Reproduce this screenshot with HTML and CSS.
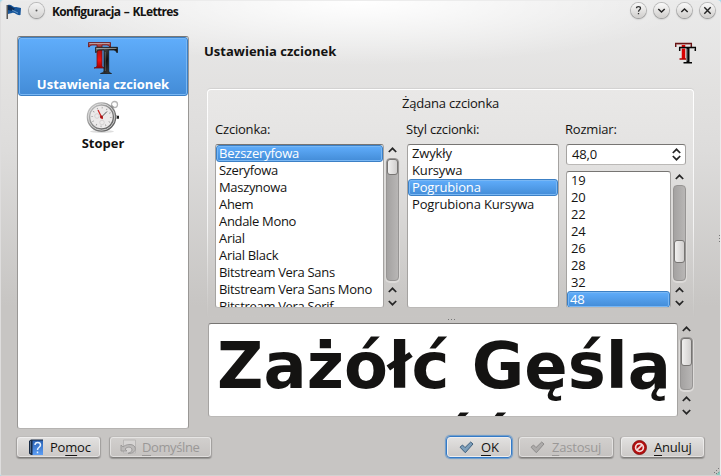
FILE: index.html
```html
<!DOCTYPE html>
<html lang="pl">
<head>
<meta charset="utf-8">
<title>Konfiguracja – KLettres</title>
<link rel="stylesheet" href="styles.css">
</head>
<body>
<svg class="defs" width="0" height="0">
  <defs>
    <linearGradient id="red" x1="0" y1="0" x2="0" y2="1"><stop offset="0" stop-color="#a56060"/><stop offset=".3" stop-color="#b01010"/><stop offset=".7" stop-color="#f01010"/><stop offset="1" stop-color="#a00000"/></linearGradient>
    <linearGradient id="blk" x1="0" y1="0" x2="1" y2="1"><stop offset="0" stop-color="#777"/><stop offset=".5" stop-color="#111"/><stop offset="1" stop-color="#555"/></linearGradient>
    <linearGradient id="steel" x1="0" y1="0" x2="1" y2="1"><stop offset="0" stop-color="#ccc"/><stop offset=".5" stop-color="#888"/><stop offset="1" stop-color="#555"/></linearGradient>
    <linearGradient id="book" x1="0" y1="0" x2="0" y2="1"><stop offset="0" stop-color="#2a62b4"/><stop offset="1" stop-color="#5b9df5"/></linearGradient>
    <symbol id="up" viewBox="0 0 9 6"><path d="M.8 5 4.500 1.300 8.200 5" fill="none" stroke="#262626" stroke-width="1.700"/></symbol>
    <symbol id="down" viewBox="0 0 9 6"><path d="M.8 1 4.500 4.700 8.200 1" fill="none" stroke="#262626" stroke-width="1.700"/></symbol>
    <symbol id="check" viewBox="0 0 15 13"><path d="M1 6.200 3.500 4 6 6.600 11.700 1 14 3 6.300 11.700Z"/></symbol>
    <symbol id="fonts" viewBox="0 0 32 34">
      <path d="M1.500 1.500H23.500V6H22.700Q22 4 20 4H15V25Q15 26.500 17.500 27H7Q10 26.500 10 25V4H5Q3 4 2.300 6H1.500Z" fill="url(#red)" stroke="#6c1416" stroke-width=".8"/>
      <path d="M8.500 6.300H30.500V11.500H29.700Q29 9 27 9H21.700V30Q21.700 32 24.500 32.500H13.500Q17 32 17 30V9H12Q10 9 9.300 11.500H8.500Z" fill="url(#blk)" stroke="#1a1a1a" stroke-width=".8"/>
      <path d="M2.500 2.500H22.500M9.500 7.500H29.500" stroke="#ccc" stroke-opacity=".6"/>
      <path d="M18.300 11V30" stroke="#bbb" stroke-opacity=".4" stroke-width=".8"/>
    </symbol>
  </defs>
</svg>
<div class="window">
  <header class="titlebar">
    <svg class="flag" width="16" height="16" viewBox="0 0 16 16"><path d="M1.200 1V15" stroke="#333" stroke-width="1.200"/><path d="M2 1C6 0 7 4 10 3L15 4 14.500 11C11 12 9 8 6 9L2 10Z" fill="#17569b"/><path d="M2 1.500C5 1 6 4 9 4.500L7 7 2 6Z" fill="#0d2e59"/><path d="M6 6 12 9" stroke="#6497ca"/></svg>
    <span class="round menu-dot"><svg width="15" height="15" viewBox="0 0 15 15"><circle cx="7.500" cy="7.500" r="1" fill="#555"/></svg></span>
    <h1>Konfiguracja – KLettres</h1>
    <div class="controls">
      <span class="round"><svg width="15" height="15" viewBox="0 0 15 15"><path d="M5.500 5.300C5.500 3 9.500 3 9.500 5.300 9.500 6.700 7.500 6.800 7.500 8.700M7.500 10V11.200" fill="none" stroke="#333" stroke-width="1.300"/></svg></span>
      <span class="round"><svg width="15" height="15" viewBox="0 0 15 15"><path d="M4.300 6 7.500 9 10.700 6" fill="none" stroke="#222" stroke-width="1.500"/></svg></span>
      <span class="round"><svg width="15" height="15" viewBox="0 0 15 15"><path d="M4.300 9 7.500 6 10.700 9" fill="none" stroke="#222" stroke-width="1.500"/></svg></span>
      <span class="round"><svg width="15" height="15" viewBox="0 0 15 15"><path d="M4.300 4.300 10.700 10.700M10.700 4.300 4.300 10.700" stroke="#222" stroke-width="1.400"/></svg></span>
    </div>
  </header>
  <main>
    <nav class="sidebar">
      <div class="page selected">
        <svg width="32" height="34"><use href="#fonts"/></svg>
        <span>Ustawienia czcionek</span>
      </div>
      <div class="page">
        <svg width="34" height="34" viewBox="0 0 34 34">
          <ellipse cx="16" cy="31.500" rx="12" ry="1.500" fill="#ddd"/>
          <circle cx="28.500" cy="4.500" r="3" fill="none" stroke="#b5b5b5" stroke-width="1.300"/>
          <path d="M24 9 27 6" stroke="#999" stroke-width="3"/>
          <path d="M29 17.200H33" stroke="#222" stroke-width="3"/><path d="M29.500 17H31" stroke="#bbb" stroke-width="4"/>
          <circle cx="15.500" cy="17" r="13" fill="#eceaea" stroke="url(#steel)" stroke-width="3.600"/>
          <circle cx="15.500" cy="17" r="13.200" fill="none" stroke="#e8e8e8" stroke-width=".8"/>
          <circle cx="15.500" cy="17" r="9.300" fill="none" stroke="#999" stroke-width="1.700" stroke-dasharray=".8 4.070"/>
          <circle cx="11" cy="16" r="2.300" fill="none" stroke="#d5d2d2"/><circle cx="16" cy="22.500" r="2.300" fill="none" stroke="#d5d2d2"/>
          <path d="M15.500 17 21 11.500" stroke="#555"/><path d="M12 10 16.500 19" stroke="#c22" stroke-width="1.200"/><circle cx="15.500" cy="17" r="1.500" fill="#a11"/>
        </svg>
        <span>Stoper</span>
      </div>
    </nav>
    <section class="content">
      <div class="heading"><h2>Ustawienia czcionek</h2>
        <svg width="22" height="22" viewBox="0 0 22 22"><path d="M.7 5V1.500H16.300V5" fill="none" stroke="#681313" stroke-width="1.500"/><path d="M2 2.500H15.500" stroke="#bd8585" stroke-width=".8"/><path d="M8.500 3V17" stroke="#d90000" stroke-width="3.500"/><path d="M4.500 17H11" stroke="#b00000" stroke-width="1.300"/><path d="M4.700 9V5.500H20.300V9" fill="none" stroke="#050505" stroke-width="1.500"/><path d="M6 6.500H20" stroke="#999" stroke-width=".6"/><path d="M13 6V21" stroke="#050505" stroke-width="3"/><path d="M8.500 20.800H17" stroke="#050505" stroke-width="1.600"/><path d="M12 7V19" stroke="#bbb" stroke-width=".6"/></svg>
      </div>
      <div class="group">
        <h3>Żądana czcionka</h3>
        <div class="choosers">
          <div class="column family">
            <label>Czcionka:</label>
            <div class="scroll-row">
              <ul class="field list"><li class="on">Bezszeryfowa</li><li>Szeryfowa</li><li>Maszynowa</li><li>Ahem</li><li>Andale Mono</li><li>Arial</li><li>Arial Black</li><li>Bitstream Vera Sans</li><li>Bitstream Vera Sans Mono</li><li>Bitstream Vera Serif</li></ul>
              <div class="scrollbar"><svg class="arrow"><use href="#up"/></svg><div class="track"><div class="thumb thumb-family"></div></div><svg class="arrow"><use href="#up"/></svg><svg class="arrow last"><use href="#down"/></svg></div>
            </div>
          </div>
          <div class="column style">
            <label>Styl czcionki:</label>
            <ul class="field list"><li>Zwykły</li><li>Kursywa</li><li class="on">Pogrubiona</li><li>Pogrubiona Kursywa</li></ul>
          </div>
          <div class="column size">
            <label>Rozmiar:</label>
            <div class="field spin"><span>48,0</span><span class="steps"><svg class="arrow"><use href="#up"/></svg><svg class="arrow"><use href="#down"/></svg></span></div>
            <div class="scroll-row">
              <ul class="field list sizes"><li>19</li><li>20</li><li>22</li><li>24</li><li>26</li><li>28</li><li>32</li><li class="on">48</li></ul>
              <div class="scrollbar"><svg class="arrow"><use href="#up"/></svg><div class="track"><div class="thumb thumb-size"></div></div><svg class="arrow"><use href="#up"/></svg><svg class="arrow last"><use href="#down"/></svg></div>
            </div>
          </div>
        </div>
      </div>
      <div class="grip"><i></i><i></i><i></i></div>
      <div class="scroll-row preview-row">
        <div class="field preview">Zażółć Gęślą<br>Jaźń</div>
        <div class="scrollbar"><svg class="arrow"><use href="#up"/></svg><div class="track"><div class="thumb thumb-preview"></div></div><svg class="arrow"><use href="#up"/></svg><svg class="arrow last"><use href="#down"/></svg></div>
      </div>
    </section>
    <div class="grip side"><i></i><i></i><i></i></div>
  </main>
  <footer>
    <button class="help"><svg width="16" height="17" viewBox="0 0 16 17"><path d="M1 2 3 .5H15V16H3L1 14.500Z" fill="#182b45"/><path d="M4.500 1.500H15V16H4.500Z" fill="url(#book)"/><path d="M2.500 2V14" stroke="#7186a0" stroke-width=".7"/><path d="M7 6C7 2.500 12.500 2.500 12.500 6 12.500 8.500 9.500 8 9.500 11M9.500 12.500V14.200" fill="none" stroke="#e6f3ff" stroke-width="1.500"/></svg><span>Po<u>m</u>oc</span></button>
    <button class="defaults" disabled><svg width="17" height="16" viewBox="0 0 17 16"><path d="M3.500 1H15.500V14H3.500Z" fill="#d6d4d3" stroke="#b9b7b6"/><path d="M1 6V12H7L5 10C8 7 12 8 12 11 12 13 10 13 8 14.500 18 14.500 17 5.500 10 5.500 6 5.500 4 7 3 8Z" fill="#bcbab9" stroke="#989696" stroke-width=".9"/></svg><span><u>D</u>omyślne</span></button>
    <button class="ok"><svg width="15" height="13" fill="#7d9fbb" stroke="#3f5f7d"><use href="#check"/></svg><span><u>O</u>K</span></button>
    <button class="apply" disabled><svg width="15" height="13" fill="#adabaa" stroke="#8e8c8b"><use href="#check"/></svg><span><u>Z</u>astosuj</span></button>
    <button class="cancel"><svg width="15" height="15" viewBox="0 0 15 15"><circle cx="7.500" cy="7.500" r="7" fill="#b50f0f" stroke="#7a0b0b" stroke-width=".8"/><circle cx="7.500" cy="7.500" r="3.900" fill="none" stroke="#f2dada" stroke-width="1.700"/><path d="M4.800 10.200 10.200 4.800" stroke="#f2dada" stroke-width="1.800"/></svg><span><u>A</u>nuluj</span></button>
  </footer>
  <svg class="resize" width="8" height="8" viewBox="0 0 8 8"><path d="M6 1h1v1h-1zM4 3h1v1h-1zM2 5h1v1h-1zM6 5h1v1h-1zM4 6h1v1h-1z" fill="#777"/><path d="M8 4V8H4Z" fill="#86c8bd"/></svg>
</div>
</body>
</html>
```
FILE: styles.css
```css
* { box-sizing: border-box; margin: 0; padding: 0; }
body { width: 721px; height: 476px; overflow: hidden; background: #a8d9ea; font: 13px/17px "Open Sans", "Noto Sans", sans-serif; color: #141312; }
h1, h2, h3 { font-size: 13px; line-height: 18px; }
svg { display: block; flex: none; }
.defs { position: absolute; }
.window { position: relative; width: 721px; height: 476px; display: flex; flex-direction: column; border: 1px solid #ececec; border-bottom-color: #d3d2d1; border-left-color: #dedddd; border-radius: 4px 4px 2px 2px; overflow: hidden;
  background: radial-gradient(ellipse 330px 64px at 50% 0, #fff 0, rgba(255,255,255,0) 100%), linear-gradient(#eaeaea 0, #e2e1e0 90px, #dddcdb 150px, #c7c5c3 305px, #c7c5c3 100%); }
.titlebar { height: 35px; display: flex; align-items: flex-start; padding: 2px 5px 0 5px; }
.round { width: 15px; height: 15px; border-radius: 50%; background: linear-gradient(#fafafa, #cfcdcb); box-shadow: 0 0 0 1px rgba(120,120,120,.4), 0 1px 2px rgba(0,0,0,.3); }
.menu-dot { margin: 0 0 0 7px; background: linear-gradient(#f3f3f3,#d5d4d3); }
.flag { margin-top: 1px; }
.titlebar h1 { margin-left: 8px; font-size: 12px; letter-spacing: -.65px; word-spacing: 1px; }
.controls { display: flex; gap: 8px; margin-left: auto; }
main { height: 393px; display: flex; padding-left: 16px; }
.sidebar { flex: none; width: 172px; height: 393px; background: #fff; border: 1px solid #999795; border-top-color: #777; border-bottom-color: #b5b3b1; border-radius: 3px; }
.page { height: 59px; display: flex; flex-direction: column; align-items: center; padding-top: 4px; font-weight: bold; border-radius: 3px; }
.page.selected { padding-top: 3px; }
.page span { line-height: 18px; }
.page.selected, .on { color: #fff; background: linear-gradient(#60adfb, #438cd7); border: 1px solid #3c80c5; box-shadow: inset 0 0 0 1px #79b7f4; border-radius: 3px; }
.content { flex: none; width: 493px; margin-left: 15px; }
.heading { height: 53px; display: flex; justify-content: space-between; padding: 6px 0 0; }
.group { width: 487px; height: 228px; margin-left: 3px; padding: 5px 7px 0 7px; border-radius: 4px 4px 0 0; border: 1px solid transparent; background: linear-gradient(#e9e8e7, #e3e2e1 70px, #c7c5c3 218px) padding-box, linear-gradient(#fff, #f3f3f3 60%, #c7c5c3) border-box; box-shadow: 0 -1px 1px rgba(0,0,0,.07); }
.group h3 { font-weight: normal; text-align: center; line-height: 17px; letter-spacing: -.2px; }
.choosers { display: flex; margin-top: 9px; }
.column { flex: none; }
.column label { display: block; line-height: 17px; height: 23px; letter-spacing: -.2px; }
.family { width: 190px; }
.style { width: 151px; margin-right: 8px; }
.style label, .size label { padding-left: 1px; }
.style .list { width: 152px; margin-left: 2px; }
.size { width: 125px; }
.size .field.spin, .size .scroll-row { margin-left: 2px; }
.scroll-row { display: flex; gap: 1px; }
.field { flex: none; background: #fff; border: 1px solid #a5a3a1; border-top-color: #777573; border-bottom-color: #bbb9b7; border-radius: 3px; overflow: hidden; }
.list { list-style: none; width: 169px; height: 164px; letter-spacing: -.32px; }
.list li { height: 17px; line-height: 17px; padding-left: 3px; white-space: nowrap; }
.list li.on { line-height: 15px; padding-left: 2px; }
.style .list li { padding-left: 4px; letter-spacing: -.15px; }
.style .list li.on { padding-left: 3px; }
.list li:first-child.on { letter-spacing: -.22px; }
.spin { width: 120px; height: 21px; display: flex; justify-content: space-between; padding: 1px 4px 0 5px; margin-bottom: 6px; letter-spacing: -.2px; }
.steps { display: flex; flex-direction: column; gap: 1px; padding-top: 2px; }
.sizes { width: 105px; height: 137px; letter-spacing: -.2px; }
.sizes li { padding-left: 4px; }
.scrollbar { flex: none; width: 15px; display: flex; flex-direction: column; align-items: center; padding-top: 3px; }
.arrow { width: 9px; height: 6px; }
.track { flex: 1; width: 13px; margin: 5px 0 6px; background: linear-gradient(90deg,#a4a2a1,#b8b6b5); border: 1px solid #979594; border-radius: 4px; box-shadow: 0 1px 0 1px #dddbd9; }
.last { margin: 7px 0 2px; }
.thumb { width: 11px; margin: 0 auto; border: 1px solid #777573; border-radius: 3px; background: linear-gradient(90deg,#f0efee,#d1cfce); }
.thumb-family { height: 16px; }
.thumb-size { height: 23px; margin-top: 54px; }
.thumb-preview { height: 28px; }
.grip { height: 6px; display: flex; justify-content: center; gap: 2px; padding: 2px 0 0 1px; }
.grip i { width: 1px; height: 1px; background: #777; }
.grip.side { flex: none; width: 4px; height: auto; margin-left: 20px; padding-top: 11px; flex-direction: column; align-items: center; }
.preview-row { margin-left: 4px; height: 94px; }
.preview { width: 470px; text-align: center; white-space: nowrap; font: bold 64px/76px "DejaVu Sans", sans-serif; padding: 4px 0 0 2px; }
footer { display: flex; padding: 7px 15px 0 15px; gap: 8px; }
button { height: 22px; display: flex; align-items: center; color: #141312; font: 13px/17px "Open Sans", "Noto Sans", sans-serif; border: 1px solid #a3a19f; border-top-color: #bebcba; border-bottom-color: #7f7d7b; border-radius: 4px; background: linear-gradient(#e3e2e1,#cbc8c6); box-shadow: inset 0 0 0 1px rgba(255,255,255,.45), 0 1px 1px rgba(0,0,0,.25); padding-left: 11px; letter-spacing: -.2px; }
button span { line-height: 18px; }
button:disabled { color: #9a9897; background: linear-gradient(#d2d0ce,#c5c2c0); }
button u { text-underline-offset: 3px; text-decoration-skip-ink: none; }
.help { width: 85px; gap: 6px; }
.defaults { width: 103px; gap: 5px; padding-left: 10px; letter-spacing: -.4px; }
.ok { width: 66px; margin-left: auto; gap: 7px; padding-left: 12px; border-color: #347ac7; box-shadow: inset 0 0 0 1px #eee, 0 0 1px 1px #6b9bcb; }
.apply { width: 96px; gap: 7px; margin-left: -2px; }
.cancel { width: 85px; gap: 7px; margin-left: -2px; }
.resize { position: absolute; right: 0; bottom: 0; }
```
